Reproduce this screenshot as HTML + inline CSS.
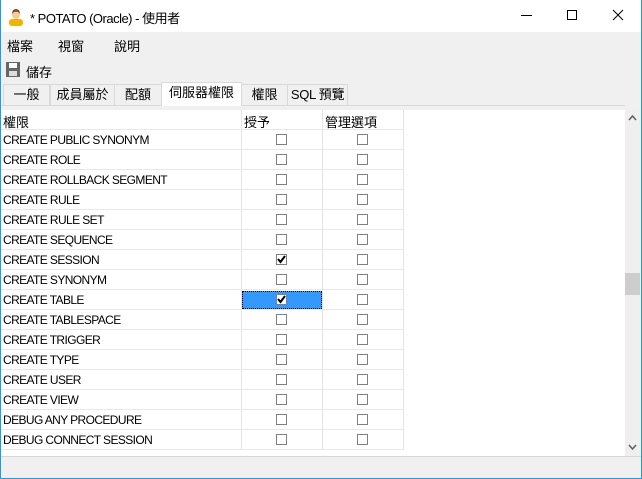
<!DOCTYPE html>
<html><head><meta charset="utf-8"><style>
*{margin:0;padding:0;box-sizing:border-box}
body{width:642px;height:479px;overflow:hidden;background:#f0f0f0;font-family:"Liberation Sans","Noto Sans CJK TC",sans-serif;font-size:12px;color:#000;position:relative}
.a{position:absolute}
.win{position:absolute;left:0;top:0;width:642px;height:479px;border:1px solid #1a9ee8;border-top:none}
.title{left:1px;top:0;width:640px;height:32px;background:#fff}
.tab{position:absolute;top:84px;height:21px;border:1px solid #d9d9d9;border-bottom:none;background:#f0f0f0;text-align:center;line-height:20px;font-size:13px}
.grid{left:1px;top:110px;width:624px;height:346px;background:#fff}
.row{position:absolute;left:0;height:20px;width:403px;border-bottom:1px solid #e8e8e8}
.row span{position:absolute;left:2px;top:3px;font-size:12px;letter-spacing:-0.6px}
.cb{position:absolute;width:11px;height:11px;border:1px solid #808080;background:#fff;top:4px}
.c1{left:275px}.c2{left:356px}
.vl{position:absolute;top:0;width:1px;height:340px;background:#e3e3e3}
</style></head><body>
<div class="a title"></div>
<svg class="a" style="left:6px;top:6px" width="20" height="20" viewBox="0 0 20 20"><rect x="3" y="13" width="14" height="7" rx="3" fill="#f0b400"/><circle cx="10" cy="9" r="4" fill="#f7c9a0"/><path d="M6 8 Q6 3 10 3 Q14 3 14 8 Q12 5 10 6 Q8 5 6 8Z" fill="#8a4a1c"/></svg>
<div class="a" style="left:30px;top:8px;font-size:13px;letter-spacing:-0.5px">* POTATO (Oracle) - 使用者</div>
<div class="a" style="left:521px;top:15px;width:11px;height:1px;background:#000"></div>
<div class="a" style="left:567px;top:10px;width:10px;height:10px;border:1px solid #000"></div>
<svg class="a" style="left:612px;top:9px" width="12" height="12"><path d="M1 1L11 11M11 1L1 11" stroke="#000" stroke-width="1"/></svg>
<div class="a" style="left:7px;top:36px;font-size:13px">檔案</div>
<div class="a" style="left:58px;top:36px;font-size:13px">視窗</div>
<div class="a" style="left:114px;top:36px;font-size:13px">說明</div>
<svg class="a" style="left:6px;top:62px" width="14" height="15"><rect x="0" y="0" width="14" height="15" fill="#666"/><rect x="3" y="1" width="8" height="5" fill="#fff"/><rect x="3" y="9" width="8" height="5" fill="#ddd"/></svg>
<div class="a" style="left:26px;top:62px;font-size:13px">儲存</div>
<div class="tab" style="left:3px;width:47px">一般</div>
<div class="tab" style="left:50px;width:65px">成員屬於</div>
<div class="tab" style="left:114px;width:48px">配額</div>
<div class="tab" style="left:161px;width:81px;top:82px;height:24px;background:#fff;z-index:2">伺服器權限</div>
<div class="tab" style="left:241px;width:47px">權限</div>
<div class="tab" style="left:287px;width:61px;letter-spacing:-0.3px">SQL 預覽</div>
<div class="a" style="left:1px;top:105px;width:624px;height:1px;background:#d9d9d9"></div>
<div class="a grid">
<div class="vl" style="left:240px"></div><div class="vl" style="left:321px"></div><div class="vl" style="left:402px"></div>
<div class="row" style="top:0"><span style="font-size:13px;top:2px;letter-spacing:0">權限</span><span style="left:243px;font-size:13px;top:2px;letter-spacing:0">授予</span><span style="left:324px;font-size:13px;top:2px;letter-spacing:0">管理選項</span></div>
</div>
<div class="a" style="left:1px;top:130px">
<div class="row" style="top:0"><span>CREATE PUBLIC SYNONYM</span><i class="cb c1"></i><i class="cb c2"></i></div>
<div class="row" style="top:20px"><span>CREATE ROLE</span><i class="cb c1"></i><i class="cb c2"></i></div>
<div class="row" style="top:40px"><span>CREATE ROLLBACK SEGMENT</span><i class="cb c1"></i><i class="cb c2"></i></div>
<div class="row" style="top:60px"><span>CREATE RULE</span><i class="cb c1"></i><i class="cb c2"></i></div>
<div class="row" style="top:80px"><span>CREATE RULE SET</span><i class="cb c1"></i><i class="cb c2"></i></div>
<div class="row" style="top:100px"><span>CREATE SEQUENCE</span><i class="cb c1"></i><i class="cb c2"></i></div>
<div class="row" style="top:120px"><span>CREATE SESSION</span><i class="cb c1"><svg width="9" height="9" style="position:absolute;left:0;top:0"><path d="M1 4L3.5 7L8 1" stroke="#000" stroke-width="2" fill="none"/></svg></i><i class="cb c2"></i></div>
<div class="row" style="top:140px"><span>CREATE SYNONYM</span><i class="cb c1"></i><i class="cb c2"></i></div>
<div class="row" style="top:160px"><span>CREATE TABLE</span><div style="position:absolute;left:241px;top:1px;width:80px;height:18px;background:#3399ff;border:1px dotted #000"></div><i class="cb c1"><svg width="9" height="9" style="position:absolute;left:0;top:0"><path d="M1 4L3.5 7L8 1" stroke="#000" stroke-width="2" fill="none"/></svg></i><i class="cb c2"></i></div>
<div class="row" style="top:180px"><span>CREATE TABLESPACE</span><i class="cb c1"></i><i class="cb c2"></i></div>
<div class="row" style="top:200px"><span>CREATE TRIGGER</span><i class="cb c1"></i><i class="cb c2"></i></div>
<div class="row" style="top:220px"><span>CREATE TYPE</span><i class="cb c1"></i><i class="cb c2"></i></div>
<div class="row" style="top:240px"><span>CREATE USER</span><i class="cb c1"></i><i class="cb c2"></i></div>
<div class="row" style="top:260px"><span>CREATE VIEW</span><i class="cb c1"></i><i class="cb c2"></i></div>
<div class="row" style="top:280px"><span>DEBUG ANY PROCEDURE</span><i class="cb c1"></i><i class="cb c2"></i></div>
<div class="row" style="top:300px"><span>DEBUG CONNECT SESSION</span><i class="cb c1"></i><i class="cb c2"></i></div>
</div>
<div class="a" style="left:625px;top:110px;width:15px;height:346px;background:#efefef"></div>
<div class="a" style="left:625px;top:273px;width:15px;height:22px;background:#cdcdcd"></div>
<svg class="a" style="left:628px;top:115px" width="9" height="6"><path d="M1 5L4.5 1L8 5" stroke="#606060" stroke-width="1.5" fill="none"/></svg>
<svg class="a" style="left:628px;top:444px" width="9" height="6"><path d="M1 1L4.5 5L8 1" stroke="#606060" stroke-width="1.5" fill="none"/></svg>
<div class="a" style="left:1px;top:456px;width:640px;height:1px;background:#d8d8d8"></div>
<div class="win"></div>
</body></html>
